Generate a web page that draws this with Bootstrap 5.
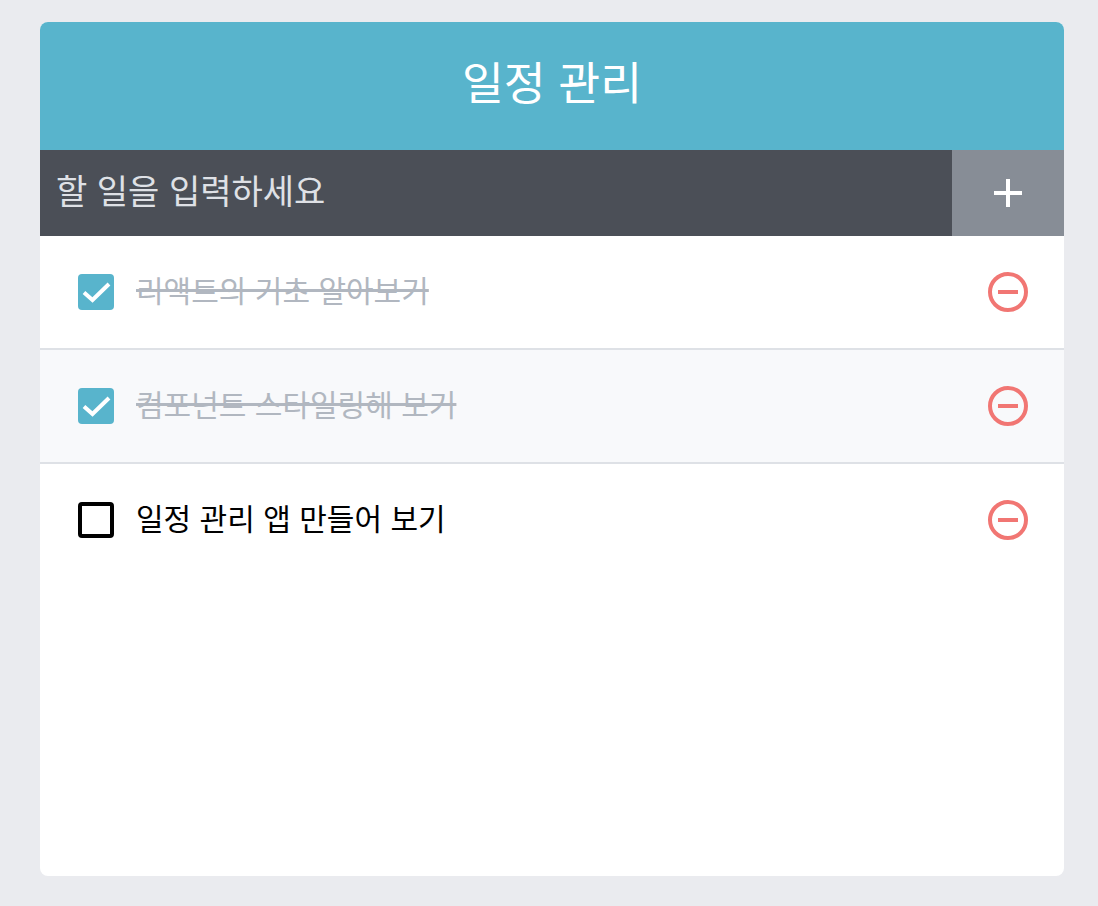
<!DOCTYPE html>
<html lang="ko">
<head>
    <meta charset="UTF-8">
    <title>일정 관리</title>
    <link href="https://cdn.jsdelivr.net/npm/bootstrap@5.3.3/dist/css/bootstrap.min.css" rel="stylesheet">
    <style>
        body { background: #eaebef; font-family: "Noto Sans CJK KR", "Liberation Sans", sans-serif; }
        .todo-wrap { width: 1024px; margin: 22px 0 0 40px; height: 854px; background: #fff; border-radius: 8px; overflow: hidden; }
        .todo-title { height: 128px; padding-bottom: 12px; background: #58b4cc; color: #fff; font-size: 45.5px; }
        .todo-form { height: 86px; background: #4b4f57; }
        .todo-input { background: transparent; border: 0; outline: 0; color: #fff; font-size: 34px; padding: 0 16px 8px; flex: 1; min-width: 0; }
        .todo-input::placeholder { color: #dfe1e6; opacity: 1; }
        .todo-add { width: 112px; background: #878d96; border: 0; padding: 0; }
        .todo-row { height: 114px; padding: 0 36px 0 38px; border-bottom: 2px solid #dee1e6; }
        .todo-row:nth-child(even) { background: #f8f9fb; }
        .todo-row:last-child { border-bottom-color: transparent; }
        .todo-text { font-size: 30px; color: #000; margin: 0 0 6px 22px; }
        .todo-text.done { color: #b1b7c0; text-decoration: line-through; }
    </style>
</head>
<body>
<div class="todo-wrap">
    <div class="todo-title d-flex align-items-center justify-content-center">일정 관리</div>
    <form class="todo-form d-flex">
        <input class="todo-input" placeholder="할 일을 입력하세요">
        <button type="button" class="todo-add d-flex align-items-center justify-content-center">
            <svg width="28" height="28" viewBox="0 0 28 28"><path d="M14 0v28M0 14h28" stroke="#fff" stroke-width="4"/></svg>
        </button>
    </form>
    <div>
        <div class="todo-row d-flex align-items-center">
            <svg width="36" height="36" viewBox="0 0 36 36"><rect width="36" height="36" rx="4" fill="#58b4cc"/><path d="M6 18.5l8.5 7.5L31 10" fill="none" stroke="#fff" stroke-width="4"/></svg>
            <span class="todo-text done">리액트의 기초 알아보기</span>
            <svg class="ms-auto" width="40" height="40" viewBox="0 0 40 40"><circle cx="20" cy="20" r="18" fill="none" stroke="#f17673" stroke-width="4"/><path d="M10 20h20" stroke="#f17673" stroke-width="4"/></svg>
        </div>
        <div class="todo-row d-flex align-items-center">
            <svg width="36" height="36" viewBox="0 0 36 36"><rect width="36" height="36" rx="4" fill="#58b4cc"/><path d="M6 18.5l8.5 7.5L31 10" fill="none" stroke="#fff" stroke-width="4"/></svg>
            <span class="todo-text done">컴포넌트 스타일링해 보기</span>
            <svg class="ms-auto" width="40" height="40" viewBox="0 0 40 40"><circle cx="20" cy="20" r="18" fill="none" stroke="#f17673" stroke-width="4"/><path d="M10 20h20" stroke="#f17673" stroke-width="4"/></svg>
        </div>
        <div class="todo-row d-flex align-items-center">
            <svg width="36" height="36" viewBox="0 0 36 36"><rect x="2" y="2" width="32" height="32" rx="2" fill="none" stroke="#000" stroke-width="4"/></svg>
            <span class="todo-text">일정 관리 앱 만들어 보기</span>
            <svg class="ms-auto" width="40" height="40" viewBox="0 0 40 40"><circle cx="20" cy="20" r="18" fill="none" stroke="#f17673" stroke-width="4"/><path d="M10 20h20" stroke="#f17673" stroke-width="4"/></svg>
        </div>
    </div>
</div>
<script src="https://cdn.jsdelivr.net/npm/bootstrap@5.3.3/dist/js/bootstrap.bundle.min.js"></script>
</body>
</html>
